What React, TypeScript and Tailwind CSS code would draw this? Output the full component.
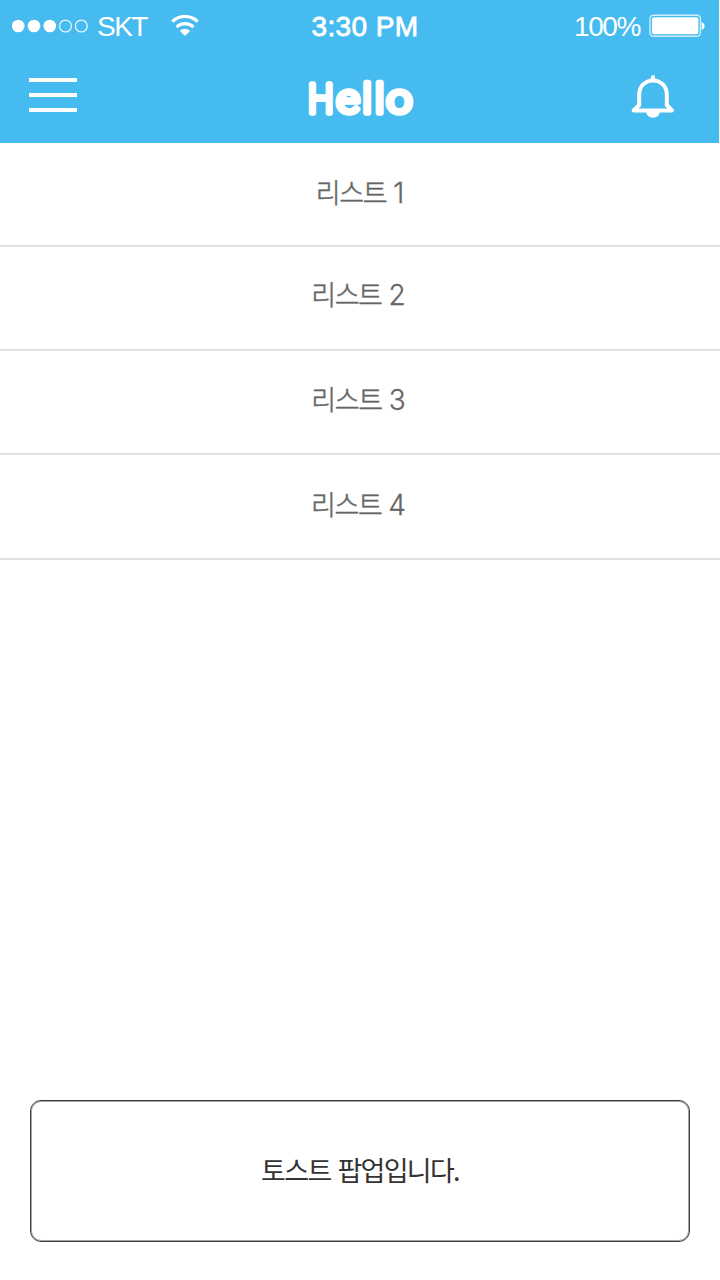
const rows = [
  { n: '1', height: 'h-[104px]', pad: 'pt-[30px] pr-[1px]' },
  { n: '2', height: 'h-[104px]', pad: 'pt-[28px] pr-[4px]' },
  { n: '3', height: 'h-[104px]', pad: 'pt-[29px] pr-[4px]' },
  { n: '4', height: 'h-[105px]', pad: 'pt-[30px] pr-[4px]' },
];

function StatusBar() {
  return (
    <div className="grid h-[52px] grid-cols-3 items-center pl-3 pr-[14px] font-['Liberation_Sans',sans-serif] text-[28px] leading-none">
      <div className="flex items-center">
        <svg width="77" height="14" viewBox="0 0 77 14" fill="white">
          <circle cx="6.2" cy="7" r="6.3" />
          <circle cx="22" cy="7" r="6.3" />
          <circle cx="37.8" cy="7" r="6.3" />
          <circle cx="53.5" cy="7" r="5.9" fill="none" stroke="white" strokeWidth="1.3" strokeOpacity=".85" />
          <circle cx="69.3" cy="7" r="5.9" fill="none" stroke="white" strokeWidth="1.3" strokeOpacity=".85" />
        </svg>
        <span className="ml-[8px] w-[53px] pt-[2px] tracking-[-1.5px]">SKT</span>
        <svg className="ml-[20.5px]" width="28" height="22" viewBox="0 0 28 22" fill="none" stroke="white" strokeWidth="3.2">
          <path d="M1.3 6.6C8.5-.3 19.5-.3 26.7 6.6" />
          <path d="M5.5 12c4.8-4.6 12.2-4.6 17 0" />
          <path d="M8.9 16c2.8-3 7.4-3 10.2 0L14 21Z" fill="white" stroke="none" />
        </svg>
      </div>
      <div className="whitespace-nowrap pl-[13px] pt-[2px] text-center tracking-[.4px] [-webkit-text-stroke:.8px_white]">3:30 PM</div>
      <div className="flex items-center justify-end">
        <span className="pt-[2px] tracking-[-1.4px]">100%</span>
        <svg className="ml-[9px]" width="56" height="24" viewBox="0 0 56 24" fill="white">
          <rect x="1" y="1.2" width="50.4" height="21" rx="3.5" fill="none" stroke="white" strokeOpacity=".75" strokeWidth="1.4" />
          <rect x="3" y="3.2" width="46.4" height="17" rx="2" />
          <path d="M52.6 8c4 1.4 4 6.6 0 8Z" />
        </svg>
      </div>
    </div>
  );
}

function TitleBar() {
  return (
    <div className="flex h-[91px] justify-between pl-[29px] pr-[44px]">
      <button aria-label="Menu" className="mt-[26px] flex h-[34px] w-12 flex-col justify-between">
        <span className="h-1 w-full bg-white" />
        <span className="h-1 w-full bg-white" />
        <span className="h-1 w-full bg-white" />
      </button>
      <h1 className="mt-[20px] pl-[14px]">
        <svg width="112" height="52" viewBox="304 72 112 52" className="font-['Roboto',sans-serif] text-[40.5px] font-light" fill="white" stroke="white" strokeWidth="5.6" strokeLinejoin="round">
          <text y="113.4">
            <tspan x="307" textLength="25.5" lengthAdjust="spacingAndGlyphs">H</tspan>
            <tspan x="335.5" textLength="23" lengthAdjust="spacingAndGlyphs">e</tspan>
            <tspan x="361.5">l</tspan>
            <tspan x="373.9">l</tspan>
            <tspan x="385.6" textLength="25.5" lengthAdjust="spacingAndGlyphs">o</tspan>
          </text>
        </svg>
      </h1>
      <button aria-label="Notifications" className="mt-[22px] h-[46px]">
        <svg width="44" height="46" viewBox="0 0 44 46" fill="none" stroke="white" strokeWidth="4" strokeLinejoin="round" strokeLinecap="round">
          <path d="M22 3v3" />
          <path d="M8.2 20.8C8.2 12.5 14 6.4 22 6.4s13.8 6.1 13.8 14.4V31l5.2 5.4H2.6L8.2 31Z" />
          <path d="M15 38h14c-1.4 7.6-12.6 7.6-14 0Z" fill="white" stroke="none" />
        </svg>
      </button>
    </div>
  );
}

export default function App() {
  return (
    <div className="flex h-[1280px] w-[720px] flex-col bg-white">
      <header className="h-[143px] w-[719px] bg-[#46bbef] text-white">
        <StatusBar />
        <TitleBar />
      </header>
      <ul className="font-['Noto_Sans_CJK_KR',sans-serif] text-[27px] leading-[38px] text-[#666]">
        {rows.map(({ n, height, pad }) => (
          <li key={n} className={`flex justify-center border-b-2 border-[#e0e0e0] ${height} ${pad}`}>
            <span className="font-light tracking-[-1.4px] [-webkit-text-stroke:.5px_#666]">리스트</span>
            <span className="ml-[7px] pt-[1px] font-['Inter',sans-serif] text-[28px] font-light tracking-[-1px] [-webkit-text-stroke:.3px_#666]">{n}</span>
          </li>
        ))}
      </ul>
      <div className="mx-[30px] mb-[38px] mt-auto flex h-[142px] items-center justify-center rounded-[11px] border border-[#3e3b3c] pb-[2px] font-['Noto_Sans_CJK_KR',sans-serif] text-[27px] leading-[38px] tracking-[-1.7px] text-[#333] shadow-[inset_0_0_0_1px_#a5a3a4] [word-spacing:2.5px]">
        토스트 팝업입니다.
      </div>
    </div>
  );
}
